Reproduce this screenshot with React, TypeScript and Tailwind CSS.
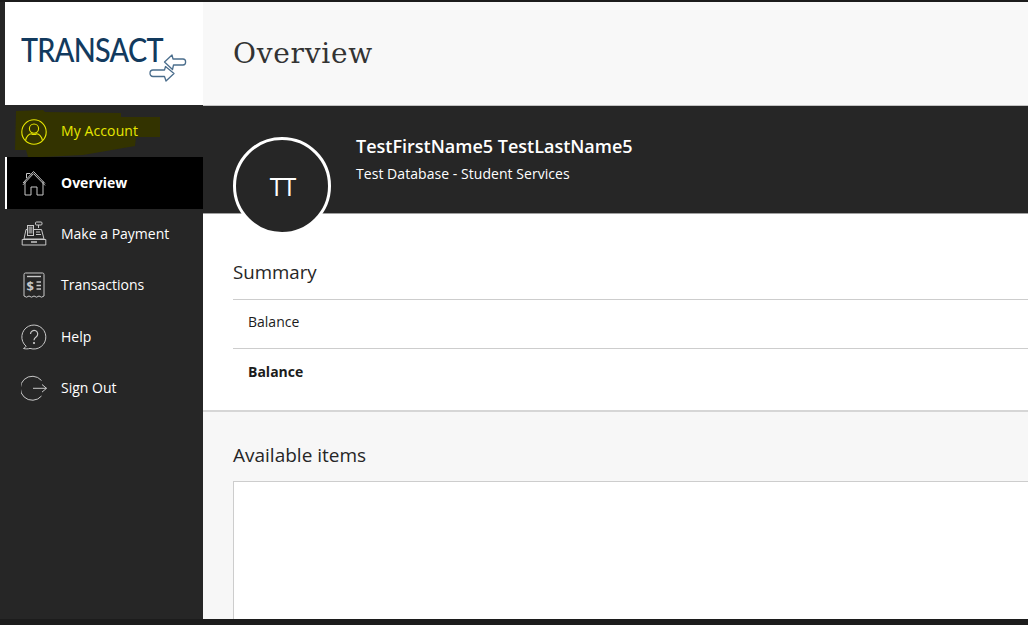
import React from 'react';

const openSans = { fontFamily: '"Open Sans", sans-serif' };

function AccountIcon() {
  return (
    <svg width="26" height="26" viewBox="0 0 26 26" fill="none" stroke="currentColor" strokeWidth="1.1">
      <circle cx="13" cy="13" r="12.2" />
      <circle cx="13" cy="9.6" r="4.6" />
      <path d="M4.6 21.5c.6-4.4 3.6-6.6 5.6-6.8 1.8 1 3.8 1 5.6 0 2 .2 5 2.4 5.6 6.8" />
    </svg>
  );
}

function HomeIcon() {
  return (
    <svg width="24" height="26" viewBox="0 0 24 26" fill="none" stroke="currentColor" strokeWidth="1">
      <path d="M1 13 11.5 1.5 23 13.5" />
      <path d="M3 11.5V25h6v-8h6v8h6V11.5" />
      <path d="M4.5 8V3.5h3.5l1 1" />
      <path d="M1 14.8 11.5 3.6 23 15.4" />
    </svg>
  );
}

function RegisterIcon() {
  return (
    <svg width="26" height="26" viewBox="0 0 26 26" fill="none" stroke="currentColor" strokeWidth="1">
      <rect x="14.5" y="1" width="6.5" height="3" rx="1" />
      <path d="M17.5 4v3" />
      <path d="M5 8.5h15.5l2.500 9.500H3z" />
      <rect x="6.500" y="4.500" width="6" height="10" fill="#262626" />
      <rect x="8" y="6" width="3" height="6" fill="currentColor" opacity="0.6" />
      <path d="M1.200 18.500h23.600V24H1.200z" />
      <path d="M10 21h6" strokeWidth="1.500" />
      <path d="M15 11h4M15 13.500h5" />
    </svg>
  );
}

function ReceiptIcon() {
  return (
    <svg width="22" height="26" viewBox="0 0 22 26" fill="none" stroke="currentColor" strokeWidth="1">
      <path d="M1 24V2.500A1.500 1.500 0 0 1 2.500 1h17A1.500 1.500 0 0 1 21 2.500V24l-2.500 1.200-2.500-1.200-2.500 1.200-2.500-1.200-2.500 1.200-2.500-1.200-2.500 1.200z" />
      <path d="M4 4.500h14" strokeWidth="1.400" />
      <path d="M13.500 10h4.500M13.500 13.500h4.500M13.500 17h4.500" strokeWidth="1.300" />
      <text x="3.500" y="19" fontSize="13" fontWeight="700" fill="currentColor" stroke="none" style={openSans}>$</text>
    </svg>
  );
}

function HelpIcon() {
  return (
    <svg width="26" height="26" viewBox="0 0 26 26" fill="none" stroke="currentColor" strokeWidth="1">
      <path d="M2.500 24.500c1.300-.6 2.200-1.400 2.600-2.300A12 12 0 1 1 9 24.400c-2 .6-4.300.7-6.500.1z" />
      <path d="M9.500 10a3.600 3.600 0 1 1 5.600 3c-1.400 1-2.100 1.600-2.100 3.200" strokeWidth="1.200" />
      <circle cx="13" cy="19" r="0.700" fill="currentColor" />
    </svg>
  );
}

function SignOutIcon() {
  return (
    <svg width="26" height="26" viewBox="0 0 26 26" fill="none" stroke="currentColor" strokeWidth="1">
      <path d="M20.500 5.500A12 12 0 1 0 20.500 21" />
      <path d="M12 13.300h13.500M21 9.500l4.500 3.800-4.500 3.800" />
    </svg>
  );
}

function LogoArrows() {
  return (
    <svg width="40" height="28" viewBox="0 0 40 28" fill="#fff" stroke="#4a6d8c" strokeWidth="1.300" strokeLinejoin="round">
      <path d="M16.500 8 24 1l1 4h10c3.500 0 3.500 6 0 6H25.500l-1 4.500z" />
      <path d="M26 19.500 18 27l-1.500-4.500H5c-4 0-4-6.500 0-6.500h11.500l1-3.500z" />
    </svg>
  );
}

const navItems = [
  { label: 'Overview', icon: <HomeIcon />, active: true },
  { label: 'Make a Payment', icon: <RegisterIcon />, nudge: true },
  { label: 'Transactions', icon: <ReceiptIcon />, nudge: true },
  { label: 'Help', icon: <HelpIcon /> },
  { label: 'Sign Out', icon: <SignOutIcon /> },
];

export default function App() {
  return (
    <div className="h-[625px] w-[1028px] overflow-hidden bg-[#1c1c1c] pt-[2px] pb-[6px] flex" style={openSans}>
      {/* sidebar */}
      <div className="w-[203px] shrink-0 flex flex-col bg-[#262626]">
        <div className="h-[103px] ml-[5px] bg-white flex items-start pl-[16px] pt-[32px] relative">
          <span className="text-[32px] leading-[32px] text-[#123a5e] tracking-[-0.8px] font-medium origin-left scale-x-[0.9]" style={{ fontFamily: 'Lato, sans-serif' }}>
            TRANSACT
          </span>
          <div className="absolute left-[143px] top-[52px]">
            <LogoArrows />
          </div>
        </div>

        <div className="relative h-[51px] mt-[1px] flex items-center text-[#e6e600] pl-[21px] gap-[14px]">
          <svg className="absolute left-[12px] top-[2px]" width="150" height="49" viewBox="0 0 150 49" fill="#333300">
            <path d="M4 3 31 2l2 2 76 1v4h39v20h-24l-1 9-52 9-40 2H16l-2-7H3z" />
          </svg>
          <span className="relative"><AccountIcon /></span>
          <span className="relative text-sm font-medium text-[#e6e600] tracking-[0.1px] pb-[1px]">My Account</span>
        </div>

        <ul className="flex flex-col">
          {navItems.map((item) => (
            <li
              key={item.label}
              className={
                item.active
                  ? 'h-[52px] ml-[5px] border-l-2 border-white bg-black flex items-center pl-[14px] gap-[14px] text-[#c8c8c8]'
                  : item.nudge
                    ? 'h-[51px] ml-[5px] pl-[16px] pb-[2px] flex items-center gap-[14px] text-[#c8c8c8]'
                    : 'h-[51px] ml-[5px] pl-[16px] flex items-center gap-[14px] text-[#c8c8c8]'
              }
            >
              <span className="w-[26px] flex justify-center">{item.icon}</span>
              <span className={item.active ? 'text-sm font-bold text-white' : 'text-sm text-white'}>{item.label}</span>
            </li>
          ))}
        </ul>
      </div>

      {/* main */}
      <div className="flex-1 min-w-0 flex flex-col bg-[#f7f7f7]">
        <div className="h-[104px] shrink-0 bg-[#f8f8f8] border-b border-[#c4c4c4] flex items-center pl-[30px]">
          <h1 className="text-[28px] text-[#333] tracking-[0.75px]" style={{ fontFamily: '"DejaVu Serif", serif' }}>
            Overview
          </h1>
        </div>

        <div className="relative h-[108px] shrink-0 bg-[#262626] border-b border-[#a0a0a0] pl-[153px] pt-[28px] text-white">
          <div className="absolute left-[30px] top-[31px] w-[98px] h-[98px] rounded-full bg-[#262626] border-[3px] border-white flex items-center justify-center text-[25px] font-medium tracking-[-1px] pt-[2px] pl-[1px]">
            TT
          </div>
          <div className="text-[18px] leading-[24px] font-semibold">TestFirstName5 TestLastName5</div>
          <div className="text-sm tracking-[0.05px] leading-[20px] mt-[6px]">Test Database - Student Services</div>
        </div>

        <div className="h-[198px] shrink-0 bg-white border-b-2 border-[#d6d6d6] pl-[30px] pt-[45px]">
          <h2 className="text-[18.7px] leading-[26px] text-[#262626] font-medium">Summary</h2>
          <div className="mt-[14px] border-t border-[#cdcdcd] h-[49px] pl-[15px] pb-[4px] flex items-center text-sm font-medium text-[#1c1c1c]">Balance</div>
          <div className="border-t border-[#cdcdcd] h-[48px] pl-[15px] pb-[2px] flex items-center text-sm font-bold text-[#1c1c1c]">Balance</div>
        </div>

        <div className="flex-1 min-h-0 pl-[30px] pt-[30px] flex flex-col">
          <h2 className="text-[19px] leading-[26px] text-[#262626] font-medium">Available items</h2>
          <div className="flex-1 mt-[13px] bg-white border-l border-t border-[#cdcdcd]" />
        </div>
      </div>
    </div>
  );
}
